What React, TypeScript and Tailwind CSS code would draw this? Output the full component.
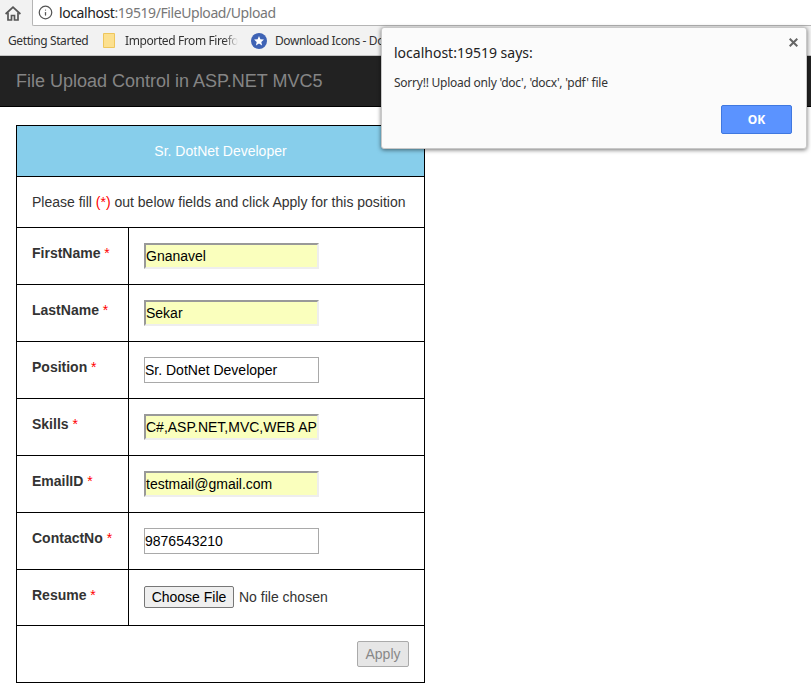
import { Info } from 'lucide-react'

const fields = [
  { label: 'FirstName', value: 'Gnanavel', filled: true },
  { label: 'LastName', value: 'Sekar', filled: true },
  { label: 'Position', value: 'Sr. DotNet Developer', filled: false },
  { label: 'Skills', value: 'C#,ASP.NET,MVC,WEB API', filled: true },
  { label: 'EmailID', value: 'testmail@gmail.com', filled: true },
  { label: 'ContactNo', value: '9876543210', filled: false },
]

function Required() {
  return <span className="text-[#ff0000] font-normal"> *</span>
}

function Row({ label, value, filled }: { label: string; value: string; filled: boolean }) {
  return (
    <div className="flex h-[57px] border-b border-black">
      <div className="w-[112px] shrink-0 border-r border-black pl-[15px] pt-[15px] text-[14px] leading-[20px] font-bold text-[#333]">
        {label}
        <Required />
      </div>
      <div className="pl-[15px] pt-[15px]">
        {filled ? (
          <input
            readOnly
            value={value}
            className="block w-[175px] h-[26px] bg-[#faffbd] border-2 border-t-[#999] border-l-[#999] border-r-[#eee] border-b-[#eee] px-0 text-[14px] text-black outline-none"
          />
        ) : (
          <input
            readOnly
            value={value}
            className="block w-[175px] h-[26px] bg-white border border-[#a9a9a9] px-0 text-[14px] text-black outline-none"
          />
        )}
      </div>
    </div>
  )
}

export default function App() {
  return (
    <div className="relative w-[811px] h-[687px] overflow-hidden bg-white font-['Liberation_Sans',Arial,sans-serif]">
      {/* browser chrome */}
      <div className="h-[26px] bg-[#f2f2f2] flex items-end">
        <div className="w-[32px] h-[26px] flex items-center pl-[5px]">
          <svg width="16" height="15" viewBox="0 0 16 15" fill="none" stroke="#555" strokeWidth="1.7">
            <path d="M.6 8 8 1.200 15.400 8" />
            <path d="M3 6.500V14h3.500V9.500h3V14H13V6.500" />
          </svg>
        </div>
        <div className="flex-1 h-[26px] bg-white border-l border-b border-[#b5b5b5] rounded-bl-[2px] flex items-center pl-[5px]">
          <Info size={15} color="#555" strokeWidth={2} />
          <span className="ml-[6px] text-[14px] tracking-[-0.42px] font-['Noto_Sans',sans-serif] text-[#777]">
            <span className="text-[#222]">localhost</span>:19519/FileUpload/Upload
          </span>
        </div>
      </div>
      <div className="h-[30px] bg-[#f2f2f2] border-b border-[#c4c4c4] flex items-center text-[12px] tracking-[-0.4px] font-['Noto_Sans',sans-serif] text-[#333] whitespace-nowrap">
        <span className="ml-[8px] w-[80px]">Getting Started</span>
        <svg className="ml-[15px]" width="12" height="15" viewBox="0 0 12 15">
          <path d="M.5.500h11v14H.5z" fill="#fce08f" stroke="#eec65c" />
        </svg>
        <span className="ml-[10px] w-[113px] overflow-hidden [mask-image:linear-gradient(to_right,black_88%,transparent)]">
          Imported From Firefox
        </span>
        <svg className="ml-[13px]" width="16" height="16" viewBox="0 0 16 16">
          <circle cx="8" cy="8" r="8" fill="#3f63b5" />
          <path d="M8 3l1.400 3.300 3.600.3-2.700 2.300.8 3.500L8 10.500l-3.100 1.900.8-3.500L3 6.600l3.600-.3z" fill="#fff" />
        </svg>
        <span className="ml-[8px]">Download Icons - Download</span>
      </div>
      <div className="h-[51px] bg-[#222] border-b border-black flex items-center pl-[16px] text-[18px] text-[#858585]">
        File Upload Control in ASP.NET MVC5
      </div>

      {/* form table */}
      <div className="ml-[16px] mt-[18px] w-[409px] border border-black border-b-0">
        <div className="h-[51px] bg-[#87ceeb] border-b border-black flex items-center justify-center text-[14px] text-white">
          Sr. DotNet Developer
        </div>
        <div className="h-[51px] border-b border-black flex items-center pl-[15px] text-[14px] text-[#333]">
          <span>
            Please fill <span className="text-[#ff0000]">(*)</span> out below fields and click Apply for this position
          </span>
        </div>
        {fields.map((f) => (
          <Row key={f.label} {...f} />
        ))}
        <div className="flex h-[56px] border-b border-black">
          <div className="w-[112px] shrink-0 border-r border-black pl-[15px] pt-[15px] text-[14px] leading-[20px] font-bold text-[#333]">
            Resume
            <Required />
          </div>
          <div className="pl-[15px] pt-[16px] flex items-start">
            <button className="h-[22px] w-[90px] bg-[#efefef] border border-[#777] rounded-[2px] text-[14px] text-black leading-none">
              Choose File
            </button>
            <span className="ml-[5px] text-[14px] leading-[22px] text-[#333]">No file chosen</span>
          </div>
        </div>
        <div className="h-[57px] border-b border-black flex justify-end pr-[15px] pt-[15px]">
          <button className="w-[52px] h-[26px] bg-[#e6e6e6] border border-[#aaa] rounded-[2px] text-[14px] text-[#888]">
            Apply
          </button>
        </div>
      </div>

      {/* alert dialog */}
      <div className="absolute left-[381px] top-[27px] w-[426px] h-[122px] bg-[#fbfbfb] border border-[#c8c8c8] rounded-[3px] shadow-[0_1px_4px_rgba(0,0,0,0.55)] font-['Noto_Sans',sans-serif]">
        <div className="absolute left-[12px] top-[14px] text-[14px] leading-[22px] text-[#222]">localhost:19519 says:</div>
        <div className="absolute left-[12px] top-[46px] text-[12px] tracking-[-0.24px] leading-[18px] text-[#333]">
          Sorry!! Upload only 'doc', 'docx', 'pdf' file
        </div>
        <svg className="absolute right-[8px] top-[10px]" width="9" height="9" viewBox="0 0 9 9" stroke="#666" strokeWidth="2">
          <path d="M.7.700 8.300 8.300M8.300.700.700 8.300" />
        </svg>
        <button className="absolute left-[339px] top-[77px] w-[71px] h-[29px] bg-[#5b93ff] border border-[#3f78e0] rounded-[2px] text-[12px] font-bold text-white">
          OK
        </button>
      </div>
    </div>
  )
}
